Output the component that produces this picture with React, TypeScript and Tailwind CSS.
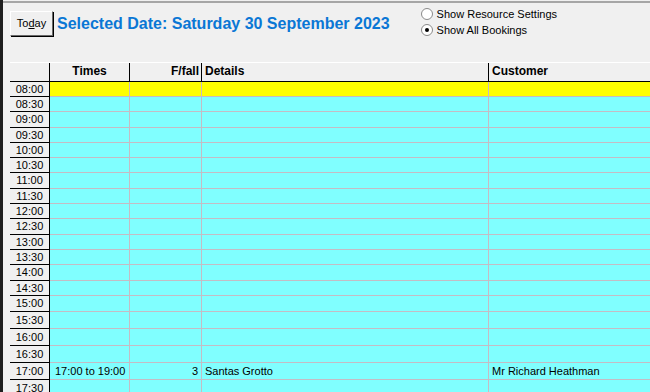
import React from 'react';

type Row = { time: string; h: number; booking?: { times: string; ffall: string; details: string; customer: string } };

// pitch of each row (incl. its bottom line), as measured off the screen
const rows: Row[] = [
  { time: '08:00', h: 15 },
  { time: '08:30', h: 15 },
  { time: '09:00', h: 16 },
  { time: '09:30', h: 15 },
  { time: '10:00', h: 15 },
  { time: '10:30', h: 15 },
  { time: '11:00', h: 16 },
  { time: '11:30', h: 15 },
  { time: '12:00', h: 15 },
  { time: '12:30', h: 16 },
  { time: '13:00', h: 15 },
  { time: '13:30', h: 15 },
  { time: '14:00', h: 16 },
  { time: '14:30', h: 15 },
  { time: '15:00', h: 16 },
  { time: '15:30', h: 17 },
  { time: '16:00', h: 17 },
  { time: '16:30', h: 17 },
  {
    time: '17:00',
    h: 17,
    booking: { times: '17:00 to 19:00', ffall: '3', details: 'Santas Grotto', customer: 'Mr Richard Heathman' },
  },
  { time: '17:30', h: 17 },
];

function Radio({ checked, label }: { checked?: boolean; label: string }) {
  return (
    <div className="flex items-center gap-[4px] h-[16px]">
      <div className="w-[12px] h-[12px] rounded-full border border-[#8a8a8a] bg-white flex items-center justify-center">
        {checked && <div className="w-[4px] h-[4px] rounded-full bg-black" />}
      </div>
      <span className="text-[11px] text-black">{label}</span>
    </div>
  );
}

function App() {
  return (
    <div className="w-[650px] h-[392px] overflow-hidden flex bg-[#f0f0f0] font-['Liberation_Sans',Arial,sans-serif]">
      <div className="w-[3px] bg-[#1e1e1e] shrink-0" />
      <div className="flex-1 flex flex-col pt-[1px]">
        <div className="shrink-0 border-t-2 border-[#a6a6a6]" />

        {/* toolbar */}
        <div className="shrink-0 h-[59px] flex items-start pl-[7px]">
          <button className="mt-[8px] w-[43px] h-[25px] bg-[#f0f0f0] border border-t-white border-l-white border-r-[#696969] border-b-[#696969] shadow-[1px_1px_0_#000] text-[11px] text-black leading-none">
            To<span className="underline">d</span>ay
          </button>
          <div className="ml-[4px] mt-[12px] text-[16px] font-bold text-[#0a77d5] leading-[18px]">
            Selected Date: Saturday 30 September 2023
          </div>
          <div className="ml-[31px] mt-[3px] flex flex-col">
            <Radio label="Show Resource Settings" />
            <Radio label="Show All Bookings" checked />
          </div>
        </div>

        {/* grid */}
        <div className="shrink-0 pl-[7px] flex flex-col text-black">
          <div className="shrink-0 flex h-[20px] border-t border-white border-b border-b-black text-[12px] font-bold">
            <div className="w-[40px] border-r border-black" />
            <div className="w-[80px] border-r border-black flex items-center justify-center pb-[2px]">Times</div>
            <div className="w-[72px] border-r border-black flex items-center justify-end pr-[2px] pb-[2px]">F/fall</div>
            <div className="w-[287px] border-r border-black flex items-center pl-[3px] pb-[2px]">Details</div>
            <div className="flex-1 flex items-center pl-[3px] pb-[2px]">Customer</div>
          </div>
          {rows.map((r, i) => {
            const bg = i === 0 ? 'bg-[#ffff00]' : 'bg-[#80ffff]';
            return (
              <div key={r.time} className="shrink-0 flex text-[11px]" style={{ height: r.h }}>
                <div className="w-[40px] border-r border-b border-black bg-[#f0f0f0] flex items-center justify-center">
                  {r.time}
                </div>
                <div className={`flex-1 flex border-b border-[#c4bcc4] ${bg}`}>
                  <div className="w-[80px] border-r border-[#c4bcc4] flex items-center pl-[5px]">{r.booking?.times}</div>
                  <div className="w-[72px] border-r border-[#c4bcc4] flex items-center justify-end pr-[3px]">{r.booking?.ffall}</div>
                  <div className="w-[287px] border-r border-[#c4bcc4] flex items-center pl-[3px]">{r.booking?.details}</div>
                  <div className="flex-1 flex items-center pl-[3px]">{r.booking?.customer}</div>
                </div>
              </div>
            );
          })}
        </div>
      </div>
    </div>
  );
}

export default App;
